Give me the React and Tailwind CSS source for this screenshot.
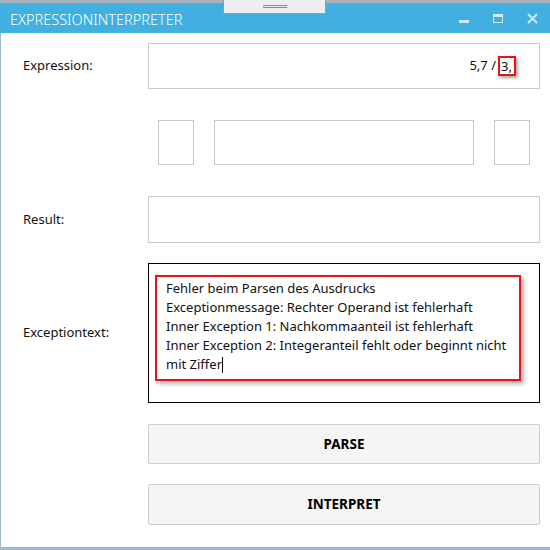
import React from 'react';

const font = { fontFamily: '"Segoe UI", "Noto Sans", "Open Sans", sans-serif' };

function TitleBar() {
  return (
    <div className="relative">
      {/* strip of the window behind */}
      <div className="h-[3px] bg-[#a9b3bd]" />
      <div className="absolute left-[223px] top-0 w-[103px] h-[14px] bg-[#ededf2] border border-[#9a9a9a] border-t-0 flex flex-col items-center justify-center gap-[1px]">
        <div className="w-[24px] h-px bg-[#8a8a8a]" />
        <div className="w-[24px] h-px bg-[#8a8a8a]" />
      </div>
      <div className="h-[30px] bg-[#41b0e1] flex items-center pl-[10px]">
        <span className="text-white text-[14.5px] font-light leading-none mt-[2px]">EXPRESSIONINTERPRETER</span>
        <div className="ml-auto flex items-center h-full">
          <div className="w-[10px] h-[3px] bg-[#cfe9f7] mt-[6px] mr-[24px]" />
          <div className="w-[10px] h-[9px] border border-[#cfe9f7] border-t-[3px] mr-[24px]" />
          <svg width="11" height="11" viewBox="0 0 11 11" className="mr-[12px]">
            <path d="M1 1 L10 10 M10 1 L1 10" stroke="#cfe9f7" strokeWidth="2" />
          </svg>
        </div>
      </div>
    </div>
  );
}

function Label({ children }) {
  return <div className="pl-[22px] flex items-center text-[13px] text-[#111]">{children}</div>;
}

function Box({ className = '', children }) {
  return <div className={`border border-[#cacaca] bg-white ${className}`}>{children}</div>;
}

function Btn({ children, className = '' }) {
  return (
    <div className={`border border-[#cccccc] bg-[#f5f5f5] rounded-[2px] flex items-center justify-center text-[13.5px] font-bold text-black ${className}`}>
      {children}
    </div>
  );
}

export default function App() {
  const lines = [
    'Fehler beim Parsen des Ausdrucks',
    'Exceptionmessage: Rechter Operand ist fehlerhaft',
    'Inner Exception 1: Nachkommaanteil ist fehlerhaft',
    'Inner Exception 2: Integeranteil fehlt oder beginnt nicht',
  ];

  return (
    <div className="w-[550px] h-[550px] bg-white overflow-hidden flex flex-col" style={font}>
      <TitleBar />
      <div className="flex-1 border-l border-[#9bb8d5] border-b-[3px] border-b-[#9bb8d5]">
        <div className="grid grid-cols-[147px_392px] pt-[10px]">
          {/* Expression */}
          <Label>Expression:</Label>
          <Box className="h-[46px] flex items-center justify-end pr-[23px] text-[13px] text-[#111]">
            <span>5,7 / </span>
            <span className="ml-[2px] border-2 border-[#e8141a] shadow-[2px_2px_3px_rgba(0,0,0,0.35)] px-[1px] h-[20px] w-[18px] leading-[16px]">3,</span>
          </Box>

          {/* row 2 */}
          <div className="mt-[31px]" />
          <div className="mt-[31px] flex gap-[20px] px-[10px]">
            <Box className="w-[36px] h-[45px]" />
            <Box className="flex-1 h-[45px]" />
            <Box className="w-[36px] h-[45px]" />
          </div>

          {/* Result */}
          <Label><span className="mt-[31px]">Result:</span></Label>
          <Box className="mt-[31px] h-[47px]" />

          {/* Exception */}
          <Label><span className="mt-[20px]">Exceptiontext:</span></Label>
          <div className="mt-[20px] h-[140px] border border-black px-[6px] pt-[11px]">
            <div className="w-[366px] h-[106px] border-2 border-[#e8141a] shadow-[3px_3px_4px_rgba(0,0,0,0.3)] pl-[9px] pt-[2px] text-[13px] leading-[19px] text-[#111]">
              {lines.map((l) => (
                <div key={l} className="whitespace-nowrap">{l}</div>
              ))}
              <div className="flex items-center">
                mit Ziffer<span className="inline-block w-px h-[16px] bg-black" />
              </div>
            </div>
          </div>

          {/* Buttons */}
          <div />
          <Btn className="mt-[21px] h-[40px]">PARSE</Btn>
          <div />
          <Btn className="mt-[20px] h-[41px]">INTERPRET</Btn>
        </div>
      </div>
    </div>
  );
}
